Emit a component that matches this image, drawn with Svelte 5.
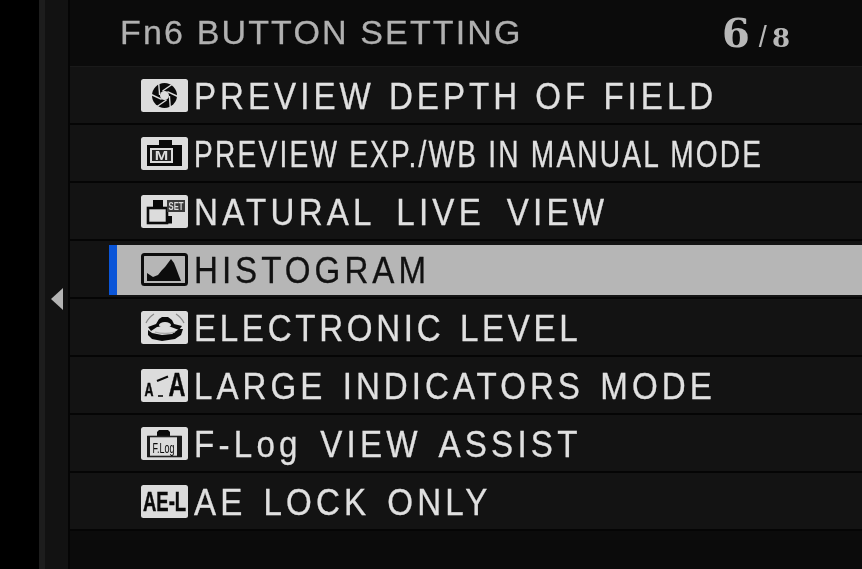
<script>
  const rows = [
    { icon: "aperture", label: "PREVIEW DEPTH OF FIELD", ls: 4.35, ws: 1 },
    { icon: "manual", label: "PREVIEW EXP./WB IN MANUAL MODE", ls: 2.86, ws: 0, narrow: true },
    { icon: "natural", label: "NATURAL LIVE VIEW", ls: 4.6, ws: 9 },
    { icon: "histogram", label: "HISTOGRAM", ls: 4.35, ws: 0, active: true },
    { icon: "level", label: "ELECTRONIC LEVEL", ls: 4, ws: 3 },
    { icon: "large", label: "LARGE INDICATORS MODE", ls: 4.35, ws: 3.5 },
    { icon: "flog", label: "F-Log VIEW ASSIST", ls: 4.6, ws: 5.5 },
    { icon: "ael", label: "AE LOCK ONLY", ls: 4.5, ws: 4 },
  ];
  const blades = [0, 60, 120, 180, 240, 300];
</script>

<div class="screen">
  <div class="gutter"></div>
  <div class="stripe"></div>
  <div class="rail">
    <svg class="arrow" width="12" height="22" viewBox="0 0 12 22"><path d="M12 0V22L0 11Z" /></svg>
  </div>
  <div class="divider"></div>
  <main>
    <header>
      <h1>Fn6 BUTTON SETTING</h1>
      <div class="page"><b>6</b><i>/</i><span>8</span></div>
    </header>
    <ul>
      {#each rows as row}
        <li>
          <div class="item" class:active={row.active}>
            <svg class="icon" width="47" height="33" viewBox="0 0 47 33">
              {#if row.icon === "histogram"}
                <rect x="1.5" y="1.5" width="44" height="30" rx="2" fill="none" stroke="#0c0c0c" stroke-width="3" />
                <path d="M6 20l6 4 5-2 4-5 3-3 3-4 3-4 3 4 2 5 3 8 2 5H6Z" fill="#0c0c0c" />
              {:else}
                <rect width="47" height="33" rx="2.5" fill="#dcdcdc" />
              {/if}
              {#if row.icon === "aperture"}
                <circle cx="23.5" cy="16.5" r="12.5" fill="#0a0a0a" />
                {#each blades as a}
                  <path d="M21.5 12L31 5.5" transform="rotate({a} 23.5 16.5)" stroke="#dcdcdc" stroke-width="1.4" fill="none" />
                {/each}
                <circle cx="23.5" cy="16.5" r="4.5" fill="#dcdcdc" />
              {:else if row.icon === "manual"}
                <path d="M6 8h12V3h13v5h10v21H6Z" fill="#0a0a0a" />
                <rect x="9" y="11" width="23" height="15" fill="#dcdcdc" />
                <rect x="11" y="13" width="19" height="11" fill="#222" />
                <text class="t" font-size="12" font-weight="700" fill="#dcdcdc" text-anchor="middle" transform="translate(20.5 23) scale(1.35 1)">M</text>
              {:else if row.icon === "natural"}
                <rect x="12" y="5" width="10" height="8" fill="#0a0a0a" />
                <rect x="7" y="13" width="19" height="15" fill="none" stroke="#0a0a0a" stroke-width="2.6" />
                <rect x="25" y="21" width="6" height="7.5" fill="#0a0a0a" />
                <rect x="26" y="5" width="18" height="12" fill="#3a3a3a" />
                <text class="t" font-size="11" font-weight="700" fill="#dcdcdc" text-anchor="middle" transform="translate(35 15) scale(0.7 1)">SET</text>
              {:else if row.icon === "level"}
                <path d="M5 12Q8 6 13 3M43 12Q40 6 35 3" stroke="#8a8a8a" stroke-width="1.3" fill="none" />
                <path d="M7 16l8-3 3-5 3-2h6l4 3 2 4 8 2-3 4-8-3-7-1-7 1-6 4Z" fill="#0a0a0a" />
                <ellipse cx="24" cy="14" rx="6" ry="3" fill="#dcdcdc" />
                <path d="M7 19l4 3 10 2 10-1 7-5h4l-2 6-6 4-13 2-10-2-4-4Z" fill="#0a0a0a" />
                <path d="M14 21q10 3 20 0" stroke="#aaa" stroke-width="1.3" fill="none" />
              {:else if row.icon === "large"}
                <path d="M16 12L27 7.5" stroke="#0a0a0a" stroke-width="2" />
                <text class="t heavy" font-size="18" font-weight="700" fill="#0a0a0a" text-anchor="middle" transform="translate(8 27) scale(0.69 1)">A</text>
                <path d="M17 27h5" stroke="#0a0a0a" stroke-width="1.6" />
                <text class="t heavy" font-size="33" font-weight="700" fill="#0a0a0a" text-anchor="middle" transform="translate(36 27) scale(0.71 1)">A</text>
              {:else if row.icon === "flog"}
                <path d="M16 9V5l2-2h9l2 2v4Z" fill="#0a0a0a" />
                <rect x="7" y="9.5" width="33" height="20" fill="none" stroke="#222" stroke-width="1.6" />
                <path d="M36 9h5v21h-5ZM6 9h3v21H6Z" fill="#1a1a1a" />
                <text class="t" font-size="15" fill="#0a0a0a" text-anchor="middle" transform="translate(22.5 26) scale(0.6 1)">F.Log</text>
              {:else if row.icon === "ael"}
                <text class="t heavy" font-size="28" font-weight="700" fill="#0a0a0a" transform="translate(2 26) scale(0.66 1)">AE-L</text>
              {/if}
            </svg>
            <span
              class="label"
              class:narrow={row.narrow}
              style="letter-spacing: {row.ls}px; word-spacing: {row.ws}px"
            >{row.label}</span>
          </div>
        </li>
      {/each}
    </ul>
  </main>
</div>

<style>
  :global(body) {
    margin: 0;
    background: #000;
    overflow: hidden;
  }

  .screen {
    display: flex;
    width: 862px;
    height: 569px;
    overflow: hidden;
    font-family: "Liberation Sans", Arial, sans-serif;
    filter: blur(0.7px);
  }

  .gutter {
    flex: 0 0 39px;
    background: #000;
  }

  .stripe {
    flex: 0 0 6px;
    background: #1d1d1d;
  }

  .rail {
    flex: 0 0 23px;
    box-sizing: border-box;
    padding: 288px 0 0 6px;
    background: #121212;
  }

  .arrow {
    display: block;
    fill: #b4b4b4;
  }

  .divider {
    flex: 0 0 2px;
    background: #050505;
  }

  main {
    flex: 1;
    min-width: 0;
    background: #0b0b0b;
  }

  header {
    display: flex;
    justify-content: space-between;
    align-items: center;
    box-sizing: border-box;
    height: 67px;
    padding: 0 72px 2px 50px;
    border-bottom: 1px solid #1a1a1a;
  }

  h1 {
    margin: 0;
    font-size: 34px;
    font-weight: 400;
    letter-spacing: 2.15px;
    color: #b0b0b0;
    white-space: nowrap;
    -webkit-text-stroke: 0.3px currentColor;
  }

  .page {
    display: flex;
    align-items: baseline;
    font-family: "DejaVu Serif", serif;
    font-weight: 700;
    color: #b8b8b8;
  }

  .page b {
    margin-right: 3px;
    font-size: 40px;
  }

  .page i {
    margin: 0 5px 0 6px;
    font-family: "Liberation Sans", sans-serif;
    font-size: 29px;
    font-weight: 400;
    font-style: normal;
  }

  .page span {
    font-size: 26px;
  }

  ul {
    display: flex;
    flex-direction: column;
    gap: 2px;
    margin: 0;
    padding: 0 0 2px;
    list-style: none;
    background: #050505;
  }

  li {
    display: flex;
    align-items: center;
    box-sizing: border-box;
    height: 56px;
    padding-top: 1px;
    background: #131313;
  }

  .item {
    display: flex;
    flex: 1;
    align-items: center;
    gap: 6px;
    height: 50px;
    padding-left: 71px;
    color: #e0e0e0;
  }

  .item.active {
    margin-left: 39px;
    padding-left: 24px;
    border-left: 8px solid #0a55d8;
    background: #b6b6b6;
    color: #111;
  }

  .icon {
    flex: none;
    overflow: visible;
  }

  .t {
    font-family: "Liberation Sans", Arial, sans-serif;
  }

  .heavy {
    stroke: #0a0a0a;
    stroke-width: 0.5px;
  }

  .label {
    padding-top: 2px;
    font-size: 36px;
    white-space: nowrap;
    -webkit-text-stroke: 0.3px currentColor;
    transform: scaleX(0.92);
    transform-origin: left center;
  }

  .label.narrow {
    transform: scaleX(0.78);
  }
</style>
